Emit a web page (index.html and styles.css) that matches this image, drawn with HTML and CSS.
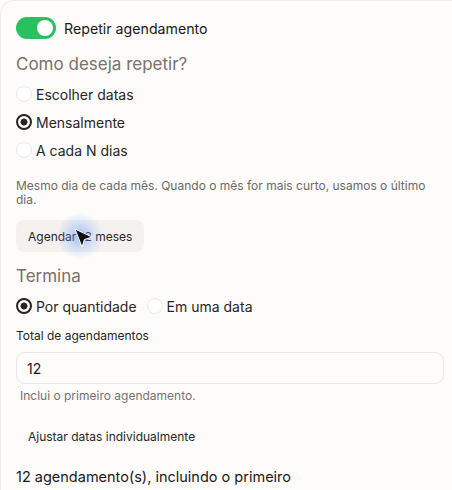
FILE: index.html
```html
<!DOCTYPE html>
<html lang="pt-BR">
<head>
<meta charset="utf-8">
<link rel="stylesheet" href="styles.css">
</head>
<body>
<div class="card">
  <div class="toggle-row">
    <span class="toggle"><span class="knob"></span></span>
    <span class="toggle-label">Repetir agendamento</span>
  </div>

  <div class="section-title first">Como deseja repetir?</div>
  <div class="radio-list">
    <label class="radio-row"><span class="radio"></span><span>Escolher datas</span></label>
    <label class="radio-row"><span class="radio checked"></span><span>Mensalmente</span></label>
    <label class="radio-row"><span class="radio"></span><span>A cada N dias</span></label>
  </div>

  <p class="desc">Mesmo dia de cada mês. Quando o mês for mais curto, usamos o último dia.</p>

  <div class="btn-wrap">
    <button class="btn soft">Agendar 12 meses</button>
    <span class="cursor">
      <svg width="22" height="22" viewBox="0 0 22 22">
        <path d="M2 1 L19 9 L11.5 11.5 L9 19 Z" fill="#111" stroke="#fff" stroke-width="1" stroke-linejoin="round"/>
      </svg>
    </span>
  </div>

  <div class="section-title second">Termina</div>
  <div class="radio-inline">
    <label class="radio-row"><span class="radio checked"></span><span>Por quantidade</span></label>
    <label class="radio-row"><span class="radio"></span><span>Em uma data</span></label>
  </div>

  <div class="field-label">Total de agendamentos</div>
  <div class="input">12</div>
  <div class="hint">Inclui o primeiro agendamento.</div>

  <button class="btn ghost">Ajustar datas individualmente</button>

  <div class="summary">12 agendamento(s), incluindo o primeiro</div>
</div>
</body>
</html>
```
FILE: styles.css
```css
* { box-sizing: border-box; }
html, body {
  margin: 0;
  padding: 0;
  background: #fdfcfb;
  font-family: Inter, "Noto Sans", sans-serif;
  color: #1c1917;
  overflow: hidden;
}
.card {
  display: flex;
  flex-direction: column;
  align-items: flex-start;
  padding: 16px 9px 0 15px;
  border-left: 1px solid #efedea;
  border-top: 1px solid #efedea;
  border-top-left-radius: 14px;
  min-height: 490px;
  background: #fdfcfb;
}
.toggle-row {
  display: flex;
  align-items: center;
  gap: 8px;
  height: 22px;
}
.toggle {
  width: 40px;
  height: 22px;
  border-radius: 11px;
  background: #27c25f;
  position: relative;
  display: block;
}
.knob {
  position: absolute;
  right: 3px;
  top: 3px;
  width: 16px;
  height: 16px;
  border-radius: 50%;
  background: #fff;
}
.toggle-label {
  font-size: 14.2px;
  color: #1c1917;
}
.section-title {
  font-size: 17px;
  line-height: 24px;
  color: #78716c;
}
.section-title.first { margin-top: 13px; }
.section-title.second { margin-top: 12px; }
.radio-list {
  display: flex;
  flex-direction: column;
  margin-top: 4px;
}
.radio-row {
  display: flex;
  align-items: center;
  gap: 4px;
  height: 28px;
  font-size: 14px;
  color: #292524;
}
.radio {
  width: 16px;
  height: 16px;
  border-radius: 50%;
  border: 1px solid #ebe8e5;
  background: #fff;
  display: block;
}
.radio.checked {
  border: 2px solid #2a2220;
  background: radial-gradient(circle, #2a2220 0 3.2px, #fff 3.8px);
}
.desc {
  margin: 15px 0 0;
  font-size: 12px;
  line-height: 14px;
  color: #6f6a66;
  max-width: 420px;
}
.btn-wrap {
  position: relative;
  margin-top: 13px;
}
.btn {
  font-family: inherit;
  border: none;
  border-radius: 8px;
  height: 32px;
  padding: 0 12px;
  font-size: 12px;
  color: #292524;
  cursor: pointer;
}
.btn.soft { background: #f5f1ee; display: block; }
.btn.ghost { background: transparent; margin-top: 16px; font-size: 12px; }
.cursor {
  position: absolute;
  left: 42px;
  top: -8px;
  width: 48px;
  height: 48px;
  border-radius: 50%;
  background: radial-gradient(circle at 45% 50%, rgba(80,140,255,0.5) 0, rgba(120,170,255,0.22) 40%, rgba(160,200,255,0) 68%);
}
.cursor svg {
  position: absolute;
  left: 15px;
  top: 16px;
}
.radio-inline {
  display: flex;
  gap: 10px;
  margin-top: 4px;
}
.field-label {
  margin-top: 7px;
  font-size: 12px;
  line-height: 18px;
  color: #292524;
}
.input {
  margin-top: 7px;
  width: 428px;
  height: 32px;
  border: 1px solid #e9e6e3;
  border-radius: 9px;
  background: #fdfcfb;
  padding: 0 10px;
  display: flex;
  align-items: center;
  font-size: 14px;
  color: #1c1917;
}
.hint {
  margin-top: 4px;
  padding-left: 4px;
  font-size: 12px;
  line-height: 16px;
  color: #78716c;
}
.summary {
  margin-top: 14px;
  font-size: 14.5px;
  line-height: 22px;
  color: #1c1917;
}
```
